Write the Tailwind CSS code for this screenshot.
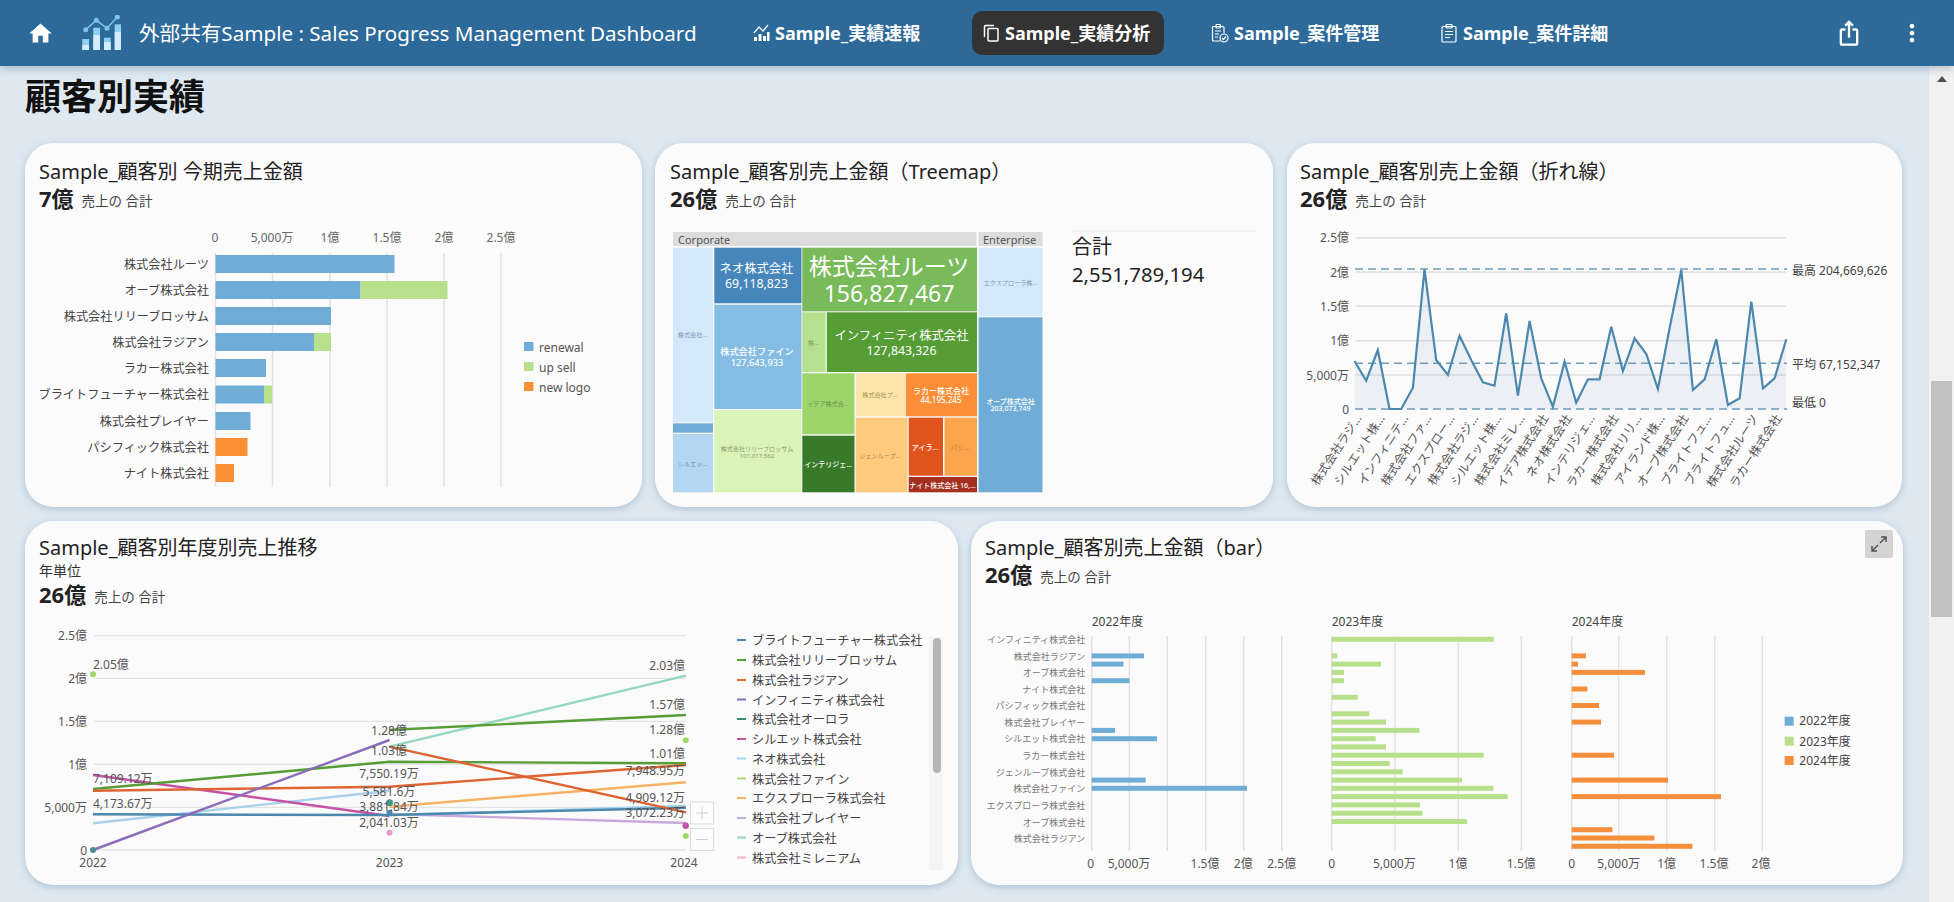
<!DOCTYPE html>
<html lang="ja">
<head>
  <meta charset="UTF-8" />
  <title>Sales Progress Management Dashboard</title>
  <script src="https://cdn.jsdelivr.net/npm/@tailwindcss/browser@4"></script>
</head>
<body class="h-screen overflow-hidden flex flex-col bg-[#dde8f1] text-[#222] font-['Noto_Sans','Noto_Sans_CJK_JP',sans-serif]">

  <!-- HEADER -->
  <header class="relative z-10 h-[66px] shrink-0 flex items-center pl-[27px] pr-[28px] bg-[#2d6a99] text-white shadow-[0_3px_8px_rgba(60,90,120,0.3)]">
    <svg class="w-[27px] h-[27px] shrink-0" viewBox="0 0 24 24" fill="#fff"><path d="M10 20v-6h4v6h5v-8h3L12 3 2 12h3v8z"/></svg>
    <svg class="ml-[28px] w-[40px] h-[36px] shrink-0" viewBox="82 16 40 36">
      <g fill="#8ed0f2">
        <rect x="82.3" y="40" width="6.7" height="11"/><rect x="93.3" y="28.7" width="6.7" height="22.3"/><rect x="104" y="38.7" width="6.7" height="12.3"/><rect x="114.7" y="25.3" width="6.3" height="25.7"/>
      </g>
      <g fill="#d3eefb">
        <rect x="82.3" y="46" width="6.7" height="5"/><rect x="93.3" y="36" width="6.7" height="15"/><rect x="104" y="43" width="6.7" height="8"/><rect x="114.7" y="33" width="6.3" height="18"/>
      </g>
      <polyline points="85.7,30.7 96.3,21.3 107,29.3 117.3,18" fill="none" stroke="#7cc4e8" stroke-width="1.5"/>
      <g fill="#7cc4e8"><circle cx="85.7" cy="30.7" r="2.5"/><circle cx="96.3" cy="21.3" r="2.5"/><circle cx="107" cy="29.3" r="2.5"/><circle cx="117.3" cy="18" r="2.5"/></g>
    </svg>
    <span class="ml-[17px] w-[602px] shrink-0 whitespace-nowrap text-[20.6px]">外部共有Sample : Sales Progress Management Dashboard</span>

    <nav class="flex items-center text-[18px] font-bold">
      <a class="w-[192px] h-[44px] px-[11px] flex items-center gap-[5px] whitespace-nowrap">
        <svg class="w-[18px] h-[18px] shrink-0" viewBox="0 0 18 18" fill="#fff"><rect x="2" y="13" width="3" height="4"/><rect x="6.5" y="10" width="3" height="7"/><rect x="11" y="12" width="3" height="5"/><rect x="15" y="8" width="2.5" height="9"/><polyline points="2,9 7,3 11,7 16,1" fill="none" stroke="#fff" stroke-width="1.2"/></svg>
        Sample_実績速報
      </a>
      <a class="ml-[39px] w-[192px] h-[44px] px-[11px] flex items-center gap-[6px] whitespace-nowrap rounded-[10px] bg-[#333]">
        <svg class="w-[16px] h-[18px] shrink-0" viewBox="0 0 16 18" fill="none" stroke="#fff" stroke-width="1.5"><rect x="5" y="4.5" width="10" height="12.5" rx="1"/><path d="M1.5 13V2.5a1 1 0 0 1 1-1H11"/></svg>
        Sample_実績分析
      </a>
      <a class="ml-[36px] w-[192px] h-[44px] px-[11px] flex items-center gap-[5px] whitespace-nowrap">
        <svg class="w-[18px] h-[20px] shrink-0" viewBox="0 0 18 20" fill="none" stroke="#fff" stroke-width="1.2"><path d="M9 18H2.5a1 1 0 0 1-1-1V4.500a1 1 0 0 1 1-1H12a1 1 0 0 1 1 1V10"/><rect x="5" y="1.500" width="4.500" height="3.500" rx=".8"/><path d="M4 8h6M4 11h4M4 14h3"/><circle cx="13" cy="15" r="4"/><path d="M11 15l1.500 1.500 2.500-3"/></svg>
        Sample_案件管理
      </a>
      <a class="ml-[38px] w-[192px] h-[44px] px-[11px] flex items-center gap-[6px] whitespace-nowrap">
        <svg class="w-[16px] h-[20px] shrink-0" viewBox="0 0 16 20" fill="none" stroke="#fff" stroke-width="1.2"><rect x="1" y="3.500" width="14" height="15.500" rx="1"/><rect x="5" y="1.500" width="6" height="3.500" rx=".8"/><path d="M4 8.500h8M4 11.500h8M4 14.500h5"/></svg>
        Sample_案件詳細
      </a>
    </nav>

    <svg class="ml-auto w-[28px] h-[28px]" viewBox="0 0 24 24" fill="#fff"><path d="M16 5l-1.420 1.420-1.590-1.590V16h-1.980V4.830L9.420 6.420 8 5l4-4 4 4zm4 5v11c0 1.100-.9 2-2 2H6c-1.110 0-2-.9-2-2V10c0-1.110.89-2 2-2h3v2H6v11h12V10h-3V8h3c1.100 0 2 .89 2 2z"/></svg>
    <svg class="ml-[35px] w-[28px] h-[28px]" viewBox="0 0 24 24" fill="#fff"><path d="M12 8c1.100 0 2-.9 2-2s-.9-2-2-2-2 .9-2 2 .9 2 2 2zm0 2c-1.100 0-2 .9-2 2s.9 2 2 2 2-.9 2-2-.9-2-2-2zm0 6c-1.100 0-2 .9-2 2s.9 2 2 2 2-.9 2-2-.9-2-2-2z"/></svg>
  </header>

  <div class="flex-1 flex min-h-0">
    <main class="w-[1929px] shrink-0 pl-[25px]">
      <h1 class="mt-[8px] mb-[23px] h-[46px] leading-[46px] text-[36px] font-bold text-[#111]">顧客別実績</h1>

      <!-- ROW 1 -->
      <div class="flex gap-[13px]">

        <section class="w-[617px] h-[364px] rounded-[28px] bg-[#fcfbfc] shadow-[0_2px_7px_rgba(90,120,150,0.35)]">
          <div class="pt-[16px] px-[14px]">
            <h2 class="h-[26px] leading-[26px] text-[20px]">Sample_顧客別 今期売上金額</h2>
            <p class="h-[30px] flex items-center gap-[8px]"><b class="-mt-[3px] text-[22px]">7億</b><span class="mt-[3px] text-[13.5px] text-[#444]">売上の 合計</span></p>
          </div>
          <svg class="block w-[617px] h-[292px]" viewBox="25 215 617 292" font-size="12" dominant-baseline="central">
            <g stroke="#e2e2e2" stroke-width="1.500">
              <line x1="215.500" x2="215.500" y1="253" y2="487"/><line x1="272.500" x2="272.500" y1="253" y2="487"/><line x1="330" x2="330" y1="253" y2="487"/><line x1="387" x2="387" y1="253" y2="487"/><line x1="444" x2="444" y1="253" y2="487"/><line x1="501" x2="501" y1="253" y2="487"/>
            </g>
            <g fill="#666" text-anchor="middle" dominant-baseline="central">
              <text x="215" y="237">0</text><text x="272" y="237">5,000万</text><text x="330" y="237">1億</text><text x="387" y="237">1.5億</text><text x="444" y="237">2億</text><text x="501" y="237">2.5億</text>
            </g>
            <g fill="#6fadd6">
              <rect x="215.500" y="255" width="179" height="18"/><rect x="215.500" y="281" width="145" height="18"/><rect x="215.500" y="307" width="115.500" height="18"/><rect x="215.500" y="333" width="98.500" height="18"/><rect x="215.500" y="359" width="50.500" height="18"/><rect x="215.500" y="385.500" width="48.500" height="18"/><rect x="215.500" y="412" width="35" height="18"/>
            </g>
            <g fill="#b8e08c"><rect x="360.500" y="281" width="87" height="18"/><rect x="314" y="333" width="17" height="18"/><rect x="264" y="385.500" width="8" height="18"/></g>
            <g fill="#fb8f35"><rect x="215.500" y="438" width="32" height="18"/><rect x="215.500" y="464" width="18.500" height="18"/></g>
            <g fill="#444" font-size="12.200" text-anchor="end" dominant-baseline="central">
              <text x="209" y="264">株式会社ルーツ</text><text x="209" y="290">オーブ株式会社</text><text x="209" y="316">株式会社リリーブロッサム</text><text x="209" y="342">株式会社ラジアン</text><text x="209" y="368">ラカー株式会社</text><text x="209" y="394">ブライトフューチャー株式会社</text><text x="209" y="421">株式会社プレイヤー</text><text x="209" y="447">パシフィック株式会社</text><text x="209" y="473">ナイト株式会社</text>
            </g>
            <rect x="524" y="342" width="9.500" height="9" fill="#6fadd6"/><rect x="524" y="362" width="9.500" height="9" fill="#b8e08c"/><rect x="524" y="382" width="9.500" height="9" fill="#fb8f35"/>
            <g fill="#555" dominant-baseline="central"><text x="539" y="347">renewal</text><text x="539" y="367">up sell</text><text x="539" y="387">new logo</text></g>
          </svg>
        </section>

        <section class="w-[618px] h-[364px] rounded-[28px] bg-[#fcfbfc] shadow-[0_2px_7px_rgba(90,120,150,0.35)]">
          <div class="pt-[16px] px-[15px]">
            <h2 class="h-[26px] leading-[26px] text-[20px]">Sample_顧客別売上金額（Treemap）</h2>
            <p class="h-[30px] flex items-center gap-[8px]"><b class="-mt-[3px] text-[22px]">26億</b><span class="mt-[3px] text-[13.5px] text-[#444]">売上の 合計</span></p>
          </div>
          <svg class="block w-[618px] h-[292px]" viewBox="655 215 618 292">
            <rect x="673" y="232" width="303.500" height="14" fill="#dcdcdc"/><rect x="978.500" y="232" width="64" height="14" fill="#dcdcdc"/>
            <g font-size="11" fill="#555" dominant-baseline="central"><text x="678" y="239">Corporate</text><text x="983" y="239">Enterprise</text></g>
            <rect x="673" y="247.700" width="40" height="174.600" fill="#d4e8fb"/>
            <rect x="673" y="423.300" width="40" height="9.400" fill="#6fadd6"/>
            <rect x="673" y="434" width="40" height="58.300" fill="#b3d7f2"/>
            <rect x="714.300" y="247.700" width="87.200" height="55.600" fill="#4686bb"/>
            <rect x="714.300" y="304.700" width="87.200" height="104.300" fill="#84bce4"/>
            <rect x="714.300" y="410" width="87.200" height="82.300" fill="#daf3b6"/>
            <rect x="802.300" y="247.700" width="174.700" height="63.600" fill="#79bb5b"/>
            <rect x="802.300" y="312.300" width="23.300" height="59.700" fill="#b5e08e"/>
            <rect x="826.800" y="312.300" width="150.200" height="59.700" fill="#569d36"/>
            <rect x="802.300" y="373.300" width="52.200" height="61" fill="#9dd56d"/>
            <rect x="802.300" y="435.700" width="52.200" height="56.600" fill="#38792a"/>
            <rect x="855.700" y="373.300" width="50.300" height="43" fill="#fde4a8"/>
            <rect x="906" y="373.300" width="71" height="43" fill="#fb8e36"/>
            <rect x="855.700" y="417.700" width="51.800" height="74.600" fill="#fdcb7b"/>
            <rect x="908.700" y="417.700" width="34.300" height="58" fill="#e0551e"/>
            <rect x="944.500" y="417.700" width="32.500" height="58" fill="#fba54c"/>
            <rect x="908.700" y="477" width="68.300" height="15.300" fill="#a5301f"/>
            <rect x="978.600" y="247.700" width="63.900" height="68.600" fill="#d4e8fb"/>
            <rect x="978.600" y="317.300" width="63.900" height="175" fill="#6fadd6"/>
            <g text-anchor="middle" dominant-baseline="central">
              <g fill="#fff">
                <text x="889" y="266" font-size="23">株式会社ルーツ</text><text x="889" y="293" font-size="23">156,827,467</text>
                <text x="901.500" y="335" font-size="12.300">インフィニティ株式会社</text><text x="901.500" y="350" font-size="12.300">127,843,326</text>
                <text x="756.500" y="268" font-size="12.300">ネオ株式会社</text><text x="756.500" y="283" font-size="12.300">69,118,823</text>
              </g>
              <g fill="#fff" font-weight="500">
                <text x="757" y="351" font-size="9.200">株式会社ファイン</text><text x="757" y="362" font-size="9.200">127,643,933</text>
                <text x="941" y="390" font-size="8">ラカー株式会社</text><text x="941" y="399" font-size="8">44,195,245</text>
                <text x="1010.500" y="401" font-size="7">オーブ株式会社</text><text x="1010.500" y="408" font-size="7">203,073,749</text>
                <text x="828" y="464" font-size="7">インテリジェ...</text>
                <text x="925" y="447" font-size="7">アイラ...</text>
                <text x="942.500" y="485" font-size="7">ナイト株式会社 16,...</text>
              </g>
              <g font-size="6.100">
                <text x="757" y="448" fill="#8a9a72">株式会社リリーブロッサム</text><text x="757" y="455" fill="#8a9a72">101,017,562</text>
                <text x="692.500" y="334" fill="#7b94ae">株式会社...</text>
                <text x="692.500" y="463" fill="#6a87a2">シルエッ...</text>
                <text x="1010.500" y="282" fill="#7b94ae">エクスプローラ株...</text>
                <text x="813.500" y="342" fill="#789a58">株...</text>
                <text x="828" y="403" fill="#6d8f4c">イデア株式会...</text>
                <text x="880" y="394" fill="#a8935c">株式会社プ...</text>
                <text x="880" y="455" fill="#a8894f">ジェンループ...</text>
                <text x="960" y="447" fill="#c8843f" font-size="7">パシ...</text>
              </g>
            </g>
            <line x1="1072" x2="1257" y1="231" y2="231" stroke="#e8e8e8"/>
            <g font-size="20" fill="#222" dominant-baseline="central"><text x="1072" y="246">合計</text><text x="1072" y="274" font-size="20.300">2,551,789,194</text></g>
          </svg>
        </section>

        <section class="ml-px w-[615px] h-[364px] rounded-[28px] bg-[#fcfbfc] shadow-[0_2px_7px_rgba(90,120,150,0.35)]">
          <div class="pt-[16px] px-[13px]">
            <h2 class="h-[26px] leading-[26px] text-[20px]">Sample_顧客別売上金額（折れ線）</h2>
            <p class="h-[30px] flex items-center gap-[8px]"><b class="-mt-[3px] text-[22px]">26億</b><span class="mt-[3px] text-[13.5px] text-[#444]">売上の 合計</span></p>
          </div>
          <svg class="block w-[615px] h-[292px]" viewBox="1287 215 615 292" font-size="12">
            <g stroke="#e0e0e0" stroke-width="1.500">
              <line x1="1355.500" x2="1786" y1="237.700" y2="237.700"/><line x1="1355.500" x2="1786" y1="272" y2="272"/><line x1="1355.500" x2="1786" y1="306.300" y2="306.300"/><line x1="1355.500" x2="1786" y1="340.700" y2="340.700"/><line x1="1355.500" x2="1786" y1="375" y2="375"/>
            </g>
            <g fill="#555" text-anchor="end" dominant-baseline="central">
              <text x="1349" y="237.700">2.5億</text><text x="1349" y="272">2億</text><text x="1349" y="306.300">1.5億</text><text x="1349" y="340.700">1億</text><text x="1349" y="375">5,000万</text><text x="1349" y="409">0</text>
            </g>
            <polygon fill="#4c87ad" fill-opacity="0.09" points="1354.500,409 1354.500,361 1366.200,380.700 1377.800,350 1389.500,409 1401.200,409 1412.900,387.700 1424.500,269.300 1436.200,360 1447.900,375 1459.500,335.700 1471.200,360 1482.900,382.300 1494.500,385.700 1506.200,313.300 1517.900,395.700 1529.600,321 1541.200,378.300 1552.900,406.700 1564.600,361.700 1576.200,402.700 1587.900,379.300 1599.600,379.300 1611.200,326.700 1622.900,371 1634.600,338.300 1646.300,354 1657.900,389 1669.600,328.300 1681.300,270 1692.900,390 1704.600,379.300 1716.300,339.300 1727.900,405 1739.600,398.300 1751.300,301.700 1763,388.300 1774.600,378.300 1786.300,339.300 1786.300,409"/>
            <g stroke="#6d9db8" stroke-width="1.500" stroke-dasharray="8 5">
              <line x1="1355" x2="1787" y1="269" y2="269"/><line x1="1355" x2="1787" y1="363.300" y2="363.300"/><line x1="1355" x2="1787" y1="409" y2="409"/>
            </g>
            <polyline fill="none" stroke="#4c87ad" stroke-width="2.200" points="1354.500,361 1366.200,380.700 1377.800,350 1389.500,409 1401.200,409 1412.900,387.700 1424.500,269.300 1436.200,360 1447.900,375 1459.500,335.700 1471.200,360 1482.900,382.300 1494.500,385.700 1506.200,313.300 1517.900,395.700 1529.600,321 1541.200,378.300 1552.900,406.700 1564.600,361.700 1576.200,402.700 1587.900,379.300 1599.600,379.300 1611.200,326.700 1622.900,371 1634.600,338.300 1646.300,354 1657.900,389 1669.600,328.300 1681.300,270 1692.900,390 1704.600,379.300 1716.300,339.300 1727.900,405 1739.600,398.300 1751.300,301.700 1763,388.300 1774.600,378.300 1786.300,339.300"/>
            <g fill="#444" dominant-baseline="central"><text x="1792" y="270">最高 204,669,626</text><text x="1792" y="364">平均 67,152,347</text><text x="1792" y="402">最低 0</text></g>
            <g fill="#555" text-anchor="end">
              <text transform="translate(1362 418) rotate(-57)">株式会社ラジ...</text>
              <text transform="translate(1385.300 418) rotate(-57)">シルエット株...</text>
              <text transform="translate(1408.700 418) rotate(-57)">インフィニテ...</text>
              <text transform="translate(1432 418) rotate(-57)">株式会社ファ...</text>
              <text transform="translate(1455.300 418) rotate(-57)">エクスプロー...</text>
              <text transform="translate(1478.700 418) rotate(-57)">株式会社ラジ...</text>
              <text transform="translate(1502 418) rotate(-57)">シルエット株...</text>
              <text transform="translate(1525.300 418) rotate(-57)">株式会社ミレ...</text>
              <text transform="translate(1548.700 418) rotate(-57)">イデア株式会社</text>
              <text transform="translate(1572 418) rotate(-57)">ネオ株式会社</text>
              <text transform="translate(1595.300 418) rotate(-57)">インテリジェ...</text>
              <text transform="translate(1618.700 418) rotate(-57)">ラカー株式会社</text>
              <text transform="translate(1642 418) rotate(-57)">株式会社リリ...</text>
              <text transform="translate(1665.300 418) rotate(-57)">アイランド株...</text>
              <text transform="translate(1688.700 418) rotate(-57)">オーブ株式会社</text>
              <text transform="translate(1712 418) rotate(-57)">ブライトフュ...</text>
              <text transform="translate(1735.300 418) rotate(-57)">ブライトフュ...</text>
              <text transform="translate(1758.700 418) rotate(-57)">株式会社ルーツ</text>
              <text transform="translate(1782 418) rotate(-57)">ラカー株式会社</text>
            </g>
          </svg>
        </section>
      </div>

      <!-- ROW 2 -->
      <div class="mt-[14px] flex gap-[13px]">

        <section class="w-[933px] h-[364px] rounded-[28px] bg-[#fcfbfc] shadow-[0_2px_7px_rgba(90,120,150,0.35)]">
          <div class="pt-[14px] px-[14px]">
            <h2 class="h-[26px] leading-[26px] text-[20px]">Sample_顧客別年度別売上推移</h2>
            <p class="h-[20px] leading-[20px] text-[14px] text-[#333]">年単位</p>
            <p class="h-[30px] flex items-center gap-[8px]"><b class="-mt-[3px] text-[22px]">26億</b><span class="mt-[3px] text-[13.5px] text-[#444]">売上の 合計</span></p>
          </div>
          <svg class="block w-[933px] h-[274px]" viewBox="25 611 933 274" font-size="12">
            <g stroke="#dedede">
              <line x1="94" x2="686" y1="635.700" y2="635.700"/><line x1="94" x2="686" y1="678.300" y2="678.300"/><line x1="94" x2="686" y1="721.300" y2="721.300"/><line x1="94" x2="686" y1="764.300" y2="764.300"/><line x1="94" x2="686" y1="807.300" y2="807.300"/><line x1="94" x2="686" y1="850" y2="850"/>
            </g>
            <g fill="#555" text-anchor="end" dominant-baseline="central">
              <text x="87" y="635">2.5億</text><text x="87" y="678">2億</text><text x="87" y="721">1.5億</text><text x="87" y="764">1億</text><text x="87" y="807">5,000万</text><text x="87" y="850">0</text>
            </g>
            <g fill="#555" text-anchor="middle" dominant-baseline="central"><text x="93" y="862">2022</text><text x="389.500" y="862">2023</text><text x="684" y="862">2024</text></g>
            <g fill="none" stroke-width="2.400">
              <polyline stroke="#a6d2ec" points="93,823.300 389.500,790.700"/>
              <polyline stroke="#c6a9dd" points="389.500,814 686,823"/>
              <polyline stroke="#94d8c0" points="389.500,746.700 686,675.700"/>
              <polyline stroke="#f7b265" points="389.500,806.700 686,782.300"/>
              <polyline stroke="#a6d2ec" points="389.500,815 686,806"/>
              <polyline stroke="#c452a6" points="93,775 389.500,816"/>
              <polyline stroke="#4c87ad" points="93,814.300 389.500,815 686,807.700"/>
              <polyline stroke="#569d36" points="93,789 389.500,761.700 686,763.300"/>
              <polyline stroke="#569d36" points="389.500,730 686,715"/>
              <polyline stroke="#dd6532" points="93,790.700 389.500,786.700 686,765"/>
              <polyline stroke="#dd6532" points="389.500,746.700 686,812.300"/>
              <polyline stroke="#8b6db8" points="93,850 389.500,740"/>
            </g>
            <g>
              <circle cx="93" cy="674.300" r="3" fill="#a3d568"/><circle cx="93" cy="850" r="3" fill="#4e8c8f"/>
              <circle cx="389.500" cy="802.700" r="3.500" fill="#3c9a8a"/><circle cx="389.500" cy="812.700" r="3" fill="#4c87ad"/><circle cx="389.500" cy="832.700" r="3" fill="#e89ac8"/>
              <circle cx="685.700" cy="740.300" r="3" fill="#a3d568"/><circle cx="685.700" cy="825.700" r="3.200" fill="#c452a6"/><circle cx="685.700" cy="836" r="3" fill="#a3d568"/>
            </g>
            <g fill="#555" dominant-baseline="central">
              <text x="93" y="664">2.05億</text><text x="93" y="778">7,109.12万</text><text x="93" y="803">4,173.67万</text>
            </g>
            <g fill="#555" text-anchor="middle" dominant-baseline="central">
              <text x="389" y="730">1.28億</text><text x="389" y="750">1.03億</text><text x="389" y="773">7,550.19万</text><text x="389" y="791">5,581.6万</text><text x="389" y="806">3,881.84万</text><text x="389" y="822">2,041.03万</text>
            </g>
            <g fill="#555" text-anchor="end" dominant-baseline="central">
              <text x="685" y="665">2.03億</text><text x="685" y="704">1.57億</text><text x="685" y="729">1.28億</text><text x="685" y="753">1.01億</text><text x="685" y="770">7,948.95万</text><text x="685" y="797">4,909.12万</text><text x="685" y="812">3,072.23万</text>
            </g>
            <g fill="#fdfdfd" fill-opacity="0.6" stroke="#dcdcdc"><rect x="690.500" y="802" width="23" height="22"/><rect x="690.500" y="828.500" width="23" height="22"/></g>
            <path d="M702 807v12M696 813h12M696 839.500h12" stroke="#d0d0d0" fill="none"/>
            <g stroke-width="2">
              <line x1="737" x2="746" y1="640" y2="640" stroke="#4c87ad"/><line x1="737" x2="746" y1="660" y2="660" stroke="#569d36"/><line x1="737" x2="746" y1="680" y2="680" stroke="#dd6532"/><line x1="737" x2="746" y1="699.500" y2="699.500" stroke="#8b6db8"/><line x1="737" x2="746" y1="719" y2="719" stroke="#3e8a80"/><line x1="737" x2="746" y1="739" y2="739" stroke="#c452a6"/><line x1="737" x2="746" y1="758.500" y2="758.500" stroke="#a6d2ec"/><line x1="737" x2="746" y1="778.500" y2="778.500" stroke="#aed880"/><line x1="737" x2="746" y1="798" y2="798" stroke="#f7b265"/><line x1="737" x2="746" y1="818" y2="818" stroke="#c6a9dd"/><line x1="737" x2="746" y1="837.500" y2="837.500" stroke="#94d8c0"/><line x1="737" x2="746" y1="857.500" y2="857.500" stroke="#eeb0d6"/>
            </g>
            <g fill="#444" font-size="12.200" dominant-baseline="central">
              <text x="752" y="640">ブライトフューチャー株式会社</text><text x="752" y="660">株式会社リリーブロッサム</text><text x="752" y="680">株式会社ラジアン</text><text x="752" y="700">インフィニティ株式会社</text><text x="752" y="719">株式会社オーロラ</text><text x="752" y="739">シルエット株式会社</text><text x="752" y="759">ネオ株式会社</text><text x="752" y="779">株式会社ファイン</text><text x="752" y="798.500">エクスプローラ株式会社</text><text x="752" y="818">株式会社プレイヤー</text><text x="752" y="838">オーブ株式会社</text><text x="752" y="858">株式会社ミレニアム</text>
            </g>
            <rect x="929" y="637" width="14" height="233" fill="#f4f4f4"/>
            <rect x="933" y="638" width="8" height="135" rx="4" fill="#b5b5b5"/>
          </svg>
        </section>

        <section class="relative w-[932px] h-[364px] rounded-[28px] bg-[#fcfbfc] shadow-[0_2px_7px_rgba(90,120,150,0.35)]">
          <button class="absolute top-[9px] right-[10px] w-[28px] h-[28px] flex items-center justify-center rounded-[2px] bg-[#d3d3d3]">
            <svg class="w-[18px] h-[18px]" viewBox="0 0 18 18" fill="none" stroke="#555" stroke-width="1.500"><path d="M10 8l6-6M11 2h5v5M8 10l-6 6M2 11v5h5"/></svg>
          </button>
          <div class="pt-[14px] px-[14px]">
            <h2 class="h-[26px] leading-[26px] text-[20px]">Sample_顧客別売上金額（bar）</h2>
            <p class="h-[30px] flex items-center gap-[8px]"><b class="-mt-[3px] text-[22px]">26億</b><span class="mt-[3px] text-[13.5px] text-[#444]">売上の 合計</span></p>
          </div>
          <svg class="block w-[932px] h-[294px]" viewBox="971 591 932 294" font-size="12">
            <g fill="#444" dominant-baseline="central"><text x="1091.700" y="621.300">2022年度</text><text x="1331.700" y="621.300">2023年度</text><text x="1571.700" y="621.300">2024年度</text></g>
            <g stroke="#e0e0e0" stroke-width="1.300">
              <line x1="1091.700" x2="1091.700" y1="636" y2="851"/><line x1="1129.300" x2="1129.300" y1="636" y2="851"/><line x1="1167.300" x2="1167.300" y1="636" y2="851"/><line x1="1205.700" x2="1205.700" y1="636" y2="851"/><line x1="1243.700" x2="1243.700" y1="636" y2="851"/><line x1="1281.700" x2="1281.700" y1="636" y2="851"/>
              <line x1="1331.700" x2="1331.700" y1="636" y2="851"/><line x1="1395" x2="1395" y1="636" y2="851"/><line x1="1458.300" x2="1458.300" y1="636" y2="851"/><line x1="1521.300" x2="1521.300" y1="636" y2="851"/>
              <line x1="1571.700" x2="1571.700" y1="636" y2="851"/><line x1="1618.700" x2="1618.700" y1="636" y2="851"/><line x1="1666.700" x2="1666.700" y1="636" y2="851"/><line x1="1714.700" x2="1714.700" y1="636" y2="851"/><line x1="1762.300" x2="1762.300" y1="636" y2="851"/>
            </g>
            <g fill="#777" font-size="9" text-anchor="end" dominant-baseline="central">
              <text x="1085.300" y="639.300">インフィニティ株式会社</text><text x="1085.300" y="656">株式会社ラジアン</text><text x="1085.300" y="672.500">オーブ株式会社</text><text x="1085.300" y="689">ナイト株式会社</text><text x="1085.300" y="705.500">パシフィック株式会社</text><text x="1085.300" y="722">株式会社プレイヤー</text><text x="1085.300" y="738.700">シルエット株式会社</text><text x="1085.300" y="755.300">ラカー株式会社</text><text x="1085.300" y="772">ジェンループ株式会社</text><text x="1085.300" y="788.500">株式会社ファイン</text><text x="1085.300" y="805.300">エクスプローラ株式会社</text><text x="1085.300" y="822">オーブ株式会社</text><text x="1085.300" y="838">株式会社ラジアン</text>
            </g>
            <g fill="#6fadd6">
              <rect x="1091.700" y="653.400" width="52.300" height="5"/><rect x="1091.700" y="661.600" width="31.700" height="5"/><rect x="1091.700" y="678.200" width="37.700" height="5"/><rect x="1091.700" y="727.900" width="23.300" height="5"/><rect x="1091.700" y="736.200" width="65.300" height="5"/><rect x="1091.700" y="777.600" width="54" height="5"/><rect x="1091.700" y="785.800" width="155.300" height="5"/>
            </g>
            <g fill="#b8e08c">
              <rect x="1331.700" y="636.800" width="162" height="5"/><rect x="1331.700" y="653.400" width="5.700" height="5"/><rect x="1331.700" y="661.600" width="49.300" height="5"/><rect x="1331.700" y="669.900" width="12.300" height="5"/><rect x="1331.700" y="678.200" width="12.300" height="5"/><rect x="1331.700" y="694.800" width="26" height="5"/><rect x="1331.700" y="711.300" width="37.700" height="5"/><rect x="1331.700" y="719.600" width="54.300" height="5"/><rect x="1331.700" y="727.900" width="87.700" height="5"/><rect x="1331.700" y="736.200" width="44" height="5"/><rect x="1331.700" y="744.400" width="54.300" height="5"/><rect x="1331.700" y="752.700" width="152" height="5"/><rect x="1331.700" y="761" width="58" height="5"/><rect x="1331.700" y="769.300" width="71" height="5"/><rect x="1331.700" y="777.600" width="130.300" height="5"/><rect x="1331.700" y="785.800" width="161.700" height="5"/><rect x="1331.700" y="794.100" width="176" height="5"/><rect x="1331.700" y="802.400" width="88.300" height="5"/><rect x="1331.700" y="810.700" width="90.700" height="5"/><rect x="1331.700" y="819" width="135.300" height="5"/>
            </g>
            <g fill="#f58f3c">
              <rect x="1571.700" y="653.400" width="14.300" height="5"/><rect x="1571.700" y="661.600" width="6.300" height="5"/><rect x="1571.700" y="669.900" width="73.300" height="5"/><rect x="1571.700" y="686.500" width="15.700" height="5"/><rect x="1571.700" y="703" width="27.300" height="5"/><rect x="1571.700" y="719.600" width="29.300" height="5"/><rect x="1571.700" y="752.700" width="42.300" height="5"/><rect x="1571.700" y="777.600" width="96.300" height="5"/><rect x="1571.700" y="794.100" width="149.300" height="5"/><rect x="1571.700" y="827.200" width="40.700" height="5"/><rect x="1571.700" y="835.500" width="82.700" height="5"/><rect x="1571.700" y="843.800" width="120.700" height="5"/>
            </g>
            <g fill="#555" text-anchor="middle" dominant-baseline="central">
              <text x="1090.700" y="863.300">0</text><text x="1129" y="863.300">5,000万</text><text x="1205" y="863.300">1.5億</text><text x="1243.300" y="863.300">2億</text><text x="1281.700" y="863.300">2.5億</text>
              <text x="1331.700" y="863.300">0</text><text x="1394.300" y="863.300">5,000万</text><text x="1458" y="863.300">1億</text><text x="1521.300" y="863.300">1.5億</text>
              <text x="1571.700" y="863.300">0</text><text x="1618.700" y="863.300">5,000万</text><text x="1666.700" y="863.300">1億</text><text x="1714" y="863.300">1.5億</text><text x="1761" y="863.300">2億</text>
            </g>
            <rect x="1784.700" y="716.700" width="9" height="9" fill="#6fadd6"/><rect x="1784.700" y="736.700" width="9" height="9" fill="#b8e08c"/><rect x="1784.700" y="756" width="9" height="9" fill="#f58f3c"/>
            <g fill="#444" dominant-baseline="central"><text x="1799.300" y="720.700">2022年度</text><text x="1799.300" y="741">2023年度</text><text x="1799.300" y="760.700">2024年度</text></g>
          </svg>
        </section>
      </div>
    </main>

    <!-- SCROLLBAR -->
    <div class="w-[25px] shrink-0 bg-[#f1f1f1] flex flex-col items-center pt-[9px]">
      <svg class="w-[12px] h-[8px]" viewBox="0 0 12 8" fill="#505050"><path d="M6 1l5 6H1z"/></svg>
      <div class="mt-[298px] w-[21px] h-[236px] bg-[#c1c1c1]"></div>
    </div>
  </div>
</body>
</html>
